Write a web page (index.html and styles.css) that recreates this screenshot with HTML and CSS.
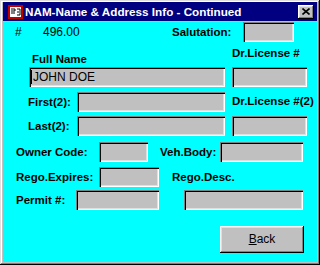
FILE: index.html
```html
<!DOCTYPE html>
<html>
<head>
<title>NAM-Name &amp; Address Info - Continued</title>
<link rel="stylesheet" href="styles.css">
</head>
<body>

<div class="window">
  <div class="titlebar">
    <svg class="app-icon" width="15" height="14" viewBox="0 0 15 14">
      <rect x="0" y="0" width="15" height="14" fill="#c00000"/>
      <rect x="2" y="2" width="11" height="10" fill="#ffffff"/>
      <path d="M3 4h4M7 4v2M3 6h4M3 8h4M9 4h3M12 4v6M9 10h3M9 7h2" stroke="#000" stroke-width="1" fill="none"/>
    </svg>
    <span class="title">NAM-Name &amp; Address Info - Continued</span>
    <span class="close-btn">
      <svg width="8" height="7" viewBox="0 0 8 7">
        <path d="M0.5 0.5l7 6M7.5 0.5l-7 6" stroke="#000" stroke-width="1.6" fill="none"/>
      </svg>
    </span>
  </div>

  <div class="content">
    <div class="row row-top">
      <span class="plain hash">#</span>
      <span class="plain amount">496.00</span>
      <span class="lbl lbl-sal">Salutation:</span>
      <span class="field f-sal"></span>
    </div>

    <div class="names">
      <div class="col-left">
        <div class="lbl lbl-full">Full Name</div>
        <div class="field f-name"><span class="caret"></span>JOHN DOE</div>
        <div class="row row-first">
          <span class="lbl lbl-short">First(2):</span>
          <span class="field f-long"></span>
        </div>
        <div class="row row-last">
          <span class="lbl lbl-short">Last(2):</span>
          <span class="field f-long"></span>
        </div>
      </div>
      <div class="col-right">
        <div class="lbl lbl-dl">Dr.License #</div>
        <div class="field f-dl"></div>
        <div class="lbl lbl-dl2">Dr.License #(2)</div>
        <div class="field f-dl f-dl2"></div>
      </div>
    </div>

    <div class="row row-owner">
      <span class="lbl lbl-wide">Owner Code:</span>
      <span class="field f-owner"></span>
      <span class="lbl lbl-veh">Veh.Body:</span>
      <span class="field f-veh"></span>
    </div>

    <div class="row row-rego">
      <span class="lbl lbl-wide">Rego.Expires:</span>
      <span class="field f-rego"></span>
      <span class="lbl lbl-desc">Rego.Desc.</span>
    </div>

    <div class="row row-permit">
      <span class="lbl lbl-permit">Permit #:</span>
      <span class="field f-permit"></span>
      <span class="field f-desc"></span>
    </div>

    <div class="btn-row">
      <span class="button"><u>B</u>ack</span>
    </div>
  </div>
</div>

</body>
</html>
```

FILE: styles.css
```css
* {
  box-sizing: border-box;
}

body {
  margin: 0;
  font-family: "Liberation Sans", Arial, sans-serif;
}

.window {
  width: 320px;
  height: 265px;
  padding: 2px 3px 4px 3px;
  background-color: #c0c0c0;
  box-shadow: inset -1px -1px #000, inset 1px 1px #dfdfdf,
              inset -2px -2px #808080, inset 2px 2px #fff;
}

.titlebar {
  height: 19px;
  background-color: #000080;
  display: flex;
  align-items: center;
  padding-left: 5px;
}

.app-icon {
  display: block;
}

.title {
  margin-left: 2px;
  color: #fff;
  font-weight: bold;
  font-size: 11.7px;
  white-space: nowrap;
}

.close-btn {
  margin-left: auto;
  margin-right: 3px;
  width: 16px;
  height: 14px;
  background-color: #c0c0c0;
  display: flex;
  align-items: center;
  justify-content: center;
  box-shadow: inset -1px -1px #000, inset 1px 1px #fff,
              inset -2px -2px #808080, inset 2px 2px #dfdfdf;
}

.close-btn svg {
  display: block;
}

.content {
  height: 240px;
  background-color: #00ffff;
  font-size: 11.5px;
  line-height: 13px;
  color: #000;
}

.row {
  display: flex;
  align-items: center;
  height: 20px;
}

.lbl {
  font-weight: bold;
  white-space: nowrap;
}

.plain {
  font-size: 12px;
}

.field {
  display: block;
  height: 20px;
  background-color: #c0c0c0;
  box-shadow: inset 1px 1px #808080, inset 2px 2px #000,
              inset -1px -1px #fff, inset -2px -2px #dfdfdf;
}

/* top row */
.row-top {
  margin-top: 1px;
  padding-left: 12px;
}

.hash {
  width: 28px;
}

.amount {
  width: 129px;
}

.lbl-sal {
  width: 71px;
}

.f-sal {
  width: 51px;
}

/* name block */
.names {
  display: flex;
}

.col-left {
  margin-left: 25px;
  width: 197px;
}

.col-right {
  margin-left: 7px;
  width: 75px;
}

.lbl-full {
  margin-top: 11px;
  margin-left: 4px;
}

.f-name {
  margin-top: 1px;
  margin-left: 1px;
  width: 196px;
  display: flex;
  align-items: center;
  padding-left: 2px;
  font-size: 12px;
}

.caret {
  width: 1px;
  height: 14px;
  background-color: #000;
  margin-right: 1px;
}

.row-first {
  margin-top: 5px;
}

.row-last {
  margin-top: 4px;
}

.lbl-short {
  width: 49px;
}

.f-long {
  width: 148px;
}

.lbl-dl {
  margin-top: 5px;
}

.f-dl {
  margin-top: 7px;
  width: 75px;
}

.lbl-dl2 {
  margin-top: 8px;
}

.f-dl2 {
  margin-top: 8px;
}

/* lower rows */
.row-owner {
  margin-top: 6px;
  padding-left: 13px;
}

.lbl-wide {
  width: 83px;
}

.f-owner {
  width: 49px;
}

.lbl-veh {
  margin-left: 12px;
  width: 60px;
}

.f-veh {
  width: 83px;
}

.row-rego {
  margin-top: 5px;
  padding-left: 13px;
}

.f-rego {
  width: 60px;
}

.lbl-desc {
  margin-left: 13px;
}

.row-permit {
  margin-top: 3px;
  padding-left: 13px;
}

.lbl-permit {
  width: 60px;
}

.f-permit {
  width: 83px;
}

.f-desc {
  margin-left: 25px;
  width: 119px;
}

.btn-row {
  margin-top: 16px;
  padding-left: 217px;
}

.button {
  width: 84px;
  height: 27px;
  display: flex;
  align-items: center;
  justify-content: center;
  font-size: 12px;
  background-color: #c0c0c0;
  box-shadow: inset -1px -1px #000, inset 1px 1px #fff,
              inset -2px -2px #808080, inset 2px 2px #dfdfdf;
}
```
